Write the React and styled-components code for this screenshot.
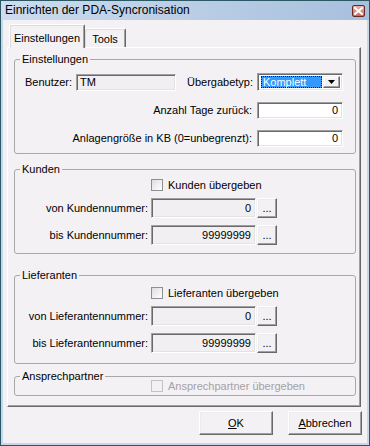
import React from 'react';
import styled, { createGlobalStyle } from 'styled-components';

const FACE = '#f4f1f4';

const Global = createGlobalStyle`
  html, body { margin: 0; padding: 0; background: #ffffff; }
  body { font-family: "Liberation Sans", Arial, sans-serif; font-size: 11px; color: #000; }
  * { box-sizing: border-box; }
`;

const Window = styled.div`
  width: 370px;
  height: 446px;
  border: 1px solid #2c5866;
  background: #c6d7eb;
  display: flex;
  flex-direction: column;
`;

const TitleBar = styled.div`
  flex: none;
  height: 19px;
  display: flex;
  align-items: center;
  justify-content: space-between;
  padding: 0 4px 0 4px;
  background: linear-gradient(to right, #cddcee 0%, #bccfe6 45%, #a7c0de 100%);
`;

const Title = styled.span`
  font-family: "Liberation Sans", Arial, sans-serif;
  font-size: 12px;
  color: #000;
  line-height: 19px;
`;

const CloseBox = styled.div`
  width: 13px;
  height: 12px;
  border: 1px solid #6a2a24;
  border-radius: 2px;
  background: linear-gradient(#e7b0a8, #cc6a5e);
  display: flex;
  align-items: center;
  justify-content: center;
`;

const Client = styled.div`
  flex: 1;
  margin: 0 2px 2px 2px;
  background: ${FACE};
  padding: 4px 5px 0 4px;
  display: flex;
  flex-direction: column;
`;

const TabRow = styled.div`
  display: flex;
  align-items: flex-end;
  height: 23px;
  margin-left: 2px;
  position: relative;
  z-index: 1;
`;

const Tab = styled.div`
  height: ${p => (p.$active ? 24 : 19)}px;
  width: ${p => p.$width}px;
  margin-bottom: ${p => (p.$active ? -1 : 0)}px;
  background: ${FACE};
  border-top: 1px solid #ffffff;
  border-left: ${p => (p.$active ? '1px solid #ffffff' : 'none')};
  border-right: 1px solid #696969;
  box-shadow: inset 1px 1px #dcdcdc, inset -1px 0 #a0a0a0;
  border-radius: 2px 2px 0 0;
  display: flex;
  justify-content: center;
  padding-top: ${p => (p.$active ? 7 : 4)}px;
  font-size: 11px;
  line-height: 13px;
`;

const Panel = styled.div`
  flex: none;
  height: 360px;
  margin-right: 1px;
  border: 1px solid;
  border-color: #ffffff #696969 #696969 #ffffff;
  box-shadow: inset -1px -1px #a0a0a0;
  padding: 0 4px 0 6px;
  display: flex;
  flex-direction: column;
`;

const Group = styled.div`
  position: relative;
  flex: none;
  margin-top: ${p => p.$mt}px;
  height: ${p => p.$h}px;
  border: 1px solid #a9a7ab;
  border-radius: 3px;
  padding: ${p => p.$pt}px 12px 0 ${p => p.$pl}px;
`;

const Legend = styled.span`
  position: absolute;
  top: -7px;
  left: 5px;
  padding: 0 2px;
  background: ${FACE};
  line-height: 13px;
  font-size: 11px;
`;

const Rows = styled.div`
  display: flex;
  flex-direction: column;
  gap: 11px;
`;

const Row = styled.div`
  display: flex;
  align-items: center;
  justify-content: ${p => (p.$end ? 'flex-end' : 'flex-start')};
  gap: ${p => p.$gap || 4}px;
`;

const Spacer = styled.div`
  flex: 1;
`;

const Label = styled.span`
  font-size: 11px;
  line-height: 13px;
  white-space: nowrap;
  color: ${p => (p.$disabled ? '#a3a1a5' : '#000')};
`;

const Field = styled.div`
  width: ${p => p.$w}px;
  height: ${p => p.$h}px;
  border: 1px solid;
  border-color: #a0a0a0 #ffffff #ffffff #a0a0a0;
  box-shadow: inset 1px 1px #696969, inset -1px -1px #e3e3e3;
  background: ${p => (p.$readOnly ? '#f1eff1' : '#ffffff')};
  display: flex;
  align-items: center;
  justify-content: ${p => (p.$right ? 'flex-end' : 'flex-start')};
  padding: 0 4px 0 3px;
  font-size: 11px;
  line-height: 13px;
  white-space: nowrap;
`;

const Select = styled.div`
  width: 86px;
  height: 18px;
  border: 1px solid;
  border-color: #a0a0a0 #ffffff #ffffff #a0a0a0;
  box-shadow: inset 1px 1px #696969, inset -1px -1px #e3e3e3;
  background: #ffffff;
  display: flex;
  align-items: stretch;
  padding: 2px 2px 2px 3px;
  gap: 1px;
`;

const Highlight = styled.div`
  flex: 1;
  background: #3399ff;
  color: #ffffff;
  outline: 1px dotted #1a1a1a;
  outline-offset: -1px;
  display: flex;
  align-items: center;
  padding-left: 2px;
  font-size: 11px;
  line-height: 13px;
`;

const DropButton = styled.div`
  width: 17px;
  background: ${FACE};
  border: 1px solid;
  border-color: #f0f0f0 #696969 #696969 #f0f0f0;
  box-shadow: inset -1px -1px #a0a0a0, inset 1px 1px #ffffff;
  display: flex;
  align-items: center;
  justify-content: center;
`;

const Grid = styled.div`
  display: grid;
  grid-template-columns: 133px auto;
  column-gap: 3px;
  row-gap: 7px;
  align-items: center;
`;

const RightLabel = styled(Label)`
  text-align: right;
`;

const FieldCell = styled.div`
  display: flex;
  align-items: center;
  gap: 1px;
`;

const DotsButton = styled.div`
  width: 20px;
  height: 20px;
  background: ${FACE};
  border: 1px solid;
  border-color: #ffffff #696969 #696969 #ffffff;
  box-shadow: inset -1px -1px #a0a0a0, inset 1px 1px #ececec;
  display: flex;
  align-items: flex-end;
  justify-content: center;
  padding-bottom: 3px;
  font-size: 11px;
  line-height: 11px;
`;

const CheckRow = styled.label`
  display: flex;
  align-items: center;
  gap: 5px;
  height: 12px;
`;

const CheckBox = styled.span`
  width: 12px;
  height: 12px;
  flex: none;
  border: 1px solid ${p => (p.$disabled ? '#c4c2c6' : '#8e8f8f')};
  background: ${p => (p.$disabled ? '#f2f0f2' : 'linear-gradient(135deg, #dedede, #ffffff)')};
`;

const ButtonRow = styled.div`
  display: flex;
  justify-content: flex-end;
  gap: 15px;
  margin-top: 4px;
`;

const Button = styled.button`
  width: 74px;
  height: 24px;
  background: ${FACE};
  border: 1px solid;
  border-color: #ffffff #696969 #696969 #ffffff;
  box-shadow: inset -1px -1px #a0a0a0, inset 1px 1px #ececec;
  font-family: "Liberation Sans", Arial, sans-serif;
  font-size: 11px;
  color: #000;
  padding: 0;
  u { text-decoration: underline; }
`;

function CloseIcon() {
  return (
    <svg width="9" height="8" viewBox="0 0 9 8">
      <path d="M1 1 L8 7 M8 1 L1 7" stroke="#ffffff" strokeWidth="2" strokeLinecap="square" />
    </svg>
  );
}

function Triangle() {
  return (
    <svg width="7" height="4" viewBox="0 0 7 4">
      <path d="M0 0 H7 L3.5 4 Z" fill="#000" />
    </svg>
  );
}

function RangeGroup({ title, check, from, to, mt, h, pt }) {
  return (
    <Group $mt={mt} $h={h} $pt={pt} $pl={0}>
      <Legend>{title}</Legend>
      <Grid>
        <span />
        <CheckRow>
          <CheckBox />
          <Label>{check}</Label>
        </CheckRow>
        <RightLabel>{from}</RightLabel>
        <FieldCell>
          <Field $w={105} $h={20} $readOnly $right>0</Field>
          <DotsButton>...</DotsButton>
        </FieldCell>
        <RightLabel>{to}</RightLabel>
        <FieldCell>
          <Field $w={105} $h={20} $readOnly $right>99999999</Field>
          <DotsButton>...</DotsButton>
        </FieldCell>
      </Grid>
    </Group>
  );
}

export default function App() {
  return (
    <>
      <Global />
      <Window>
        <TitleBar>
          <Title>Einrichten der PDA-Syncronisation</Title>
          <CloseBox><CloseIcon /></CloseBox>
        </TitleBar>
        <Client>
          <TabRow>
            <Tab $active $width={76}>Einstellungen</Tab>
            <Tab $width={41}>Tools</Tab>
          </TabRow>
          <Panel>
            <Group $mt={11} $h={95} $pt={13} $pl={10}>
              <Legend>Einstellungen</Legend>
              <Rows>
                <Row>
                  <Label>Benutzer:</Label>
                  <Field $w={100} $h={17} $readOnly>TM</Field>
                  <Spacer />
                  <Label>Übergabetyp:</Label>
                  <Select>
                    <Highlight>Komplett</Highlight>
                    <DropButton><Triangle /></DropButton>
                  </Select>
                </Row>
                <Row $end $gap={5}>
                  <Label>Anzahl Tage zurück:</Label>
                  <Field $w={86} $h={17} $right>0</Field>
                </Row>
                <Row $end $gap={5}>
                  <Label>Anlagengröße in KB (0=unbegrenzt):</Label>
                  <Field $w={86} $h={17} $right>0</Field>
                </Row>
              </Rows>
            </Group>
            <RangeGroup
              title="Kunden"
              check="Kunden übergeben"
              from="von Kundennummer:"
              to="bis Kundennummer:"
              mt={15}
              h={85}
              pt={9}
            />
            <RangeGroup
              title="Lieferanten"
              check="Lieferanten übergeben"
              from="von Lieferantennummer:"
              to="bis Lieferantennummer:"
              mt={21}
              h={89}
              pt={11}
            />
            <Group $mt={12} $h={20} $pt={0} $pl={0}>
              <Legend>Ansprechpartner</Legend>
              <Grid>
                <span />
                <CheckRow style={{ height: 18 }}>
                  <CheckBox $disabled />
                  <Label $disabled>Ansprechpartner übergeben</Label>
                </CheckRow>
              </Grid>
            </Group>
          </Panel>
          <ButtonRow>
            <Button><u>O</u>K</Button>
            <Button><u>A</u>bbrechen</Button>
          </ButtonRow>
        </Client>
      </Window>
    </>
  );
}
